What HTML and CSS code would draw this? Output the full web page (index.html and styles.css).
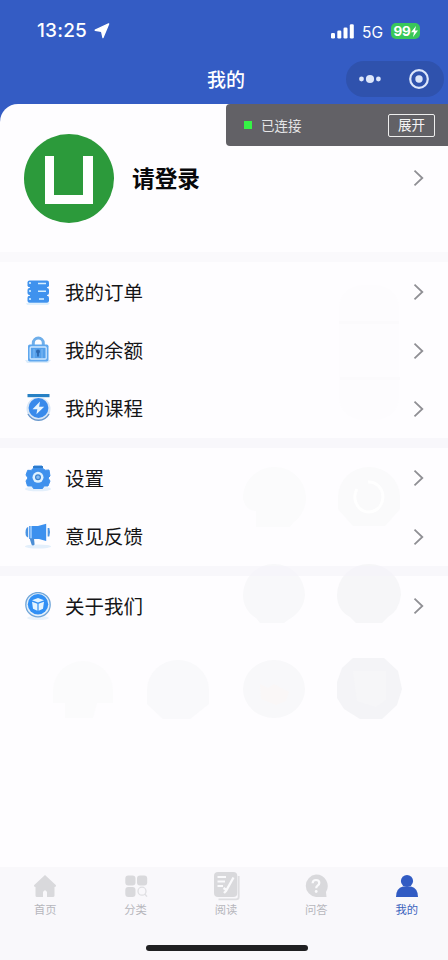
FILE: index.html
```
<!DOCTYPE html>
<html lang="zh-CN">
<head>
<meta charset="utf-8">
<title>我的</title>
<link rel="stylesheet" href="styles.css">
</head>
<body>
<svg width="0" height="0" class="defs">
  <symbol id="chev" viewBox="0 0 12 18"><path d="M1.5 1.6 9.3 9 1.5 16.4" fill="none" stroke="#8f8f94" stroke-width="1.8"/></symbol>
</svg>
<div class="screen">
  <header class="header">
    <div class="status">
      <span class="time">13:25</span>
      <svg class="loc" width="16" height="16" viewBox="0 0 16 16"><path d="M14.6.9 1.2 7.2 7.6 8.4 9 14.6Z" fill="#fff" stroke="#fff" stroke-width="1.4" stroke-linejoin="round"/></svg>
      <svg class="signal" width="24" height="15" viewBox="0 0 24 15" fill="#fff"><rect x="0" y="9" width="4" height="5.5" rx="1.3"/><rect x="6.3" y="6.5" width="4" height="8" rx="1.3"/><rect x="12.5" y="3.5" width="4" height="11" rx="1.3"/><rect x="18.8" y=".2" width="4" height="14.3" rx="1.3"/></svg>
      <span class="net">5G</span>
      <span class="battery">99<svg width="7" height="11" viewBox="0 0 7 11"><path d="M5 0 0 6.2H3L2 11 7 4.6H4Z" fill="#fff"/></svg></span>
    </div>
    <div class="nav">
      <h1>我的</h1>
      <div class="capsule">
        <svg width="22" height="10" viewBox="0 0 22 10" fill="#dce6fb"><circle cx="2.5" cy="5" r="2.4"/><circle cx="11" cy="5" r="4.1"/><circle cx="19.4" cy="5" r="2.4"/></svg>
        <svg width="20" height="20" viewBox="0 0 20 20"><circle cx="10" cy="10" r="8.8" fill="none" stroke="#dce6fb" stroke-width="2.2"/><circle cx="10" cy="10" r="3.7" fill="#dce6fb"/></svg>
      </div>
    </div>
  </header>
  <div class="debug"><i class="dot"></i><span>已连接</span><b>展开</b></div>
  <main class="sheet">
    <svg class="ghosts" width="448" height="480" viewBox="0 260 448 480">
      <rect x="339" y="285" width="60" height="135" rx="24" fill="#fdfcfe"/>
      <path d="M339 321H399V324H339ZM340 377H400V380H340Z" fill="#fbfafc"/>
      <path d="M243 499A31.5 31 0 1 1 293 523L290 527H256V511Q246 511 243 499Z" fill="#fbfbfc"/>
      <path d="M338 509V497A31 30 0 0 1 400 497V509L385 526H353Z" fill="#fafafb"/>
      <path d="M368 482A14 15 0 1 1 357 489" fill="none" stroke="#fff" stroke-width="3"/>
      <path d="M243 595A31 31 0 0 1 305 595Q304 611 288 620L284 623H260L256 618Q243 610 243 595Z" fill="#f8f8fa"/>
      <path d="M337 595A32 31 0 0 1 401 595Q399 611 388 617L382 623H356L350 617Q337 610 337 595Z" fill="#f6f6f8"/>
      <path d="M53 703V691A30 30 0 0 1 113 691V703H97L93 718H65V703Z" fill="#fbfbfc"/>
      <path d="M147 704V690A31 30 0 0 1 209 690V704L190 719H163Z" fill="#f9f9fb"/>
      <ellipse cx="274" cy="689" rx="31" ry="29" fill="#f8f8fa"/>
      <path d="M260 684 268 688 274 684 289 692 286 701 276 705 261 699Z" fill="#faf7f7"/>
      <path d="M353 658H384L398 671 402 689 397 705 382 719H360L344 709 337 698V682L342 668Z" fill="#f4f4f7"/>
      <path d="M353 671H386V700L376 707 357 701Z" fill="#f6f6f8"/>
    </svg>
    <section class="profile">
      <div class="avatar"><svg width="50" height="50" viewBox="0 0 50 50"><path d="M1 1H10V40H39V1H49V49H1Z" fill="#fff"/></svg></div>
      <strong>请登录</strong>
      <svg class="chev"><use href="#chev"/></svg>
    </section>
    <section class="group">
      <div class="row">
        <svg class="ic" viewBox="0 0 28 28"><path d="M2 25H26L24 27H3Z" fill="#dff0fd"/><g fill="#3f92ee"><rect x="3.5" y="2.5" width="21.5" height="6.8" rx="2"/><rect x="3.5" y="10" width="21.5" height="7" rx="2"/><rect x="3.5" y="17.8" width="21.5" height="7" rx="2"/></g><path d="M14 5.5H22M14 13.3H22M15 21H20" stroke="#d6efff" stroke-width="1.6"/><g fill="#d6efff"><circle cx="6" cy="5" r="1.1"/><circle cx="6" cy="13" r="1.1"/><circle cx="6" cy="21" r="1.1"/></g><path d="M6 9.7H23M6 17.4H23" stroke="#3f92ee" stroke-width="2"/></svg>
        <span>我的订单</span><svg class="chev"><use href="#chev"/></svg>
      </div>
      <div class="row">
        <svg class="ic" viewBox="0 0 28 28"><path d="M1 24H27L24 27H3Z" fill="#dcecfb"/><path d="M9.3 10V7a5 5 0 0 1 10 0V10" fill="none" stroke="#6eaeea" stroke-width="3"/><rect x="4" y="8.5" width="20.5" height="17" rx="1.8" fill="#5fa7ee"/><rect x="6.2" y="11" width="16" height="12" rx="1" fill="#549fea" stroke="#cde7ff" stroke-width="1.3"/><path d="M10 13V22M18 13V22" stroke="#78b7f4" stroke-width="1.2"/><circle cx="14" cy="15.6" r="2" fill="#2c68b0"/><path d="M13.1 16H14.9V20.5H13.1Z" fill="#2c68b0"/></svg>
        <span>我的余额</span><svg class="chev"><use href="#chev"/></svg>
      </div>
      <div class="row">
        <svg class="ic" viewBox="0 0 28 28"><rect x="3.5" y="0" width="22" height="3.2" fill="#2780c4"/><circle cx="14.5" cy="15" r="12" fill="#d8e6f6"/><path d="M4 20A12 12 0 0 0 25 20" fill="none" stroke="#6897cc" stroke-width="1.4"/><circle cx="14.5" cy="14" r="9.9" fill="#388aeb"/><path d="M16 7.5 8.5 15.3H13.3L12.4 20.2 20.2 12.7H15.1Z" fill="#e6f5ff"/></svg>
        <span>我的课程</span><svg class="chev"><use href="#chev"/></svg>
      </div>
    </section>
    <section class="group">
      <div class="row">
        <svg class="ic" viewBox="0 0 28 28"><ellipse cx="14" cy="25" rx="13" ry="2.3" fill="#e3effb"/><path d="M10 2H18L19 5 21.5 6.2 25 6 26 12 24 14 26 17 24 22H20L18.5 24.5H9.5L8 22H3.5L2 17 4 14 2 11 3.7 6.3 7 6.4 9 5Z" fill="#3f91ed" stroke="#3f91ed" stroke-linejoin="round"/><path d="M9 3H19" stroke="#2773bf" stroke-width="1.5"/><circle cx="14" cy="13.3" r="5.5" fill="#dff2ff"/><circle cx="14" cy="13.3" r="2.4" fill="#87bdf2" stroke="#3b82cf" stroke-width="1.2"/></svg>
        <span>设置</span><svg class="chev"><use href="#chev"/></svg>
      </div>
      <div class="row">
        <svg class="ic" viewBox="0 0 28 28"><ellipse cx="14" cy="24.5" rx="13" ry="2" fill="#e3effb"/><path d="M4.2 5Q1.5 5.5 1.5 10.5Q1.5 15 4.2 15.5Z" fill="#4a94e4"/><path d="M5.2 4H14L22.2 1.8V19L15 17H5.2Z" fill="#3c90ee"/><path d="M7 4V16.5" stroke="#b8dcff" stroke-width="1.3"/><path d="M5.7 16.5H10L10.6 22.5Q8.8 24.5 7.5 22.5Z" fill="#4c8ed5"/><path d="M23.6 6H25.3Q26.8 10 25.3 14.5H23.6Z" fill="#4a94e4"/></svg>
        <span>意见反馈</span><svg class="chev"><use href="#chev"/></svg>
      </div>
    </section>
    <section class="group last">
      <div class="row">
        <svg class="ic" viewBox="0 0 28 28"><ellipse cx="14" cy="26" rx="11" ry="2" fill="#e9f3fc"/><circle cx="14" cy="12.7" r="12.2" fill="#e4f0fa" stroke="#71a6d9" stroke-width="1.3"/><circle cx="14" cy="12.3" r="10.2" fill="#3190f5"/><path d="M8 8.2 14 6 20 8.2 14 10.5Z" fill="#e5f5ff"/><path d="M8 9.8 13.4 11.8V18.7L9 16.7ZM20 9.8 14.6 11.8V18.7L19 16.7Z" fill="#e5f5ff"/></svg>
        <span>关于我们</span><svg class="chev"><use href="#chev"/></svg>
      </div>
    </section>
  </main>
  <footer class="tabs">
    <nav>
      <a><svg viewBox="0 0 28 28" fill="#d9d9dc"><path d="M14 3 25 13.3Q25.5 15 23.5 15V23.5Q23.5 25 22 25H16V20Q14 16.5 12 20V25H6Q4.5 25 4.5 23.5V15Q2.5 15 3 13.3Z"/></svg>首页</a>
      <a><svg viewBox="0 0 28 28" fill="#d9d9dc"><rect x="3.3" y="3.5" width="10.2" height="10" rx="3"/><rect x="15" y="3.5" width="10.2" height="10" rx="3"/><rect x="3.3" y="15" width="10.2" height="10" rx="3"/><circle cx="20" cy="19.2" r="4" fill="none" stroke="#dfdfe2" stroke-width="1.3"/><path d="m23 22.3 2 2.3" stroke="#dfdfe2" stroke-width="1.4"/></svg>分类</a>
      <a><svg viewBox="0 0 28 28"><path d="M6.5 27.3H24Q26.7 27.3 26.7 25V4" fill="none" stroke="#dedee1" stroke-width="1.8"/><rect x="2" y="0" width="23.3" height="25" rx="4" fill="#d9d9dc"/><path d="M5.5 5H14M5.5 9.5H13M5.5 14H11" stroke="#fafafc" stroke-width="2"/><path d="M21.5 5.5 14.5 18 11.5 16M14 19 12 21" fill="none" stroke="#fafafc" stroke-width="2.3"/></svg>阅读</a>
      <a><svg viewBox="0 0 28 28"><path d="M14 2.5A11.5 11.5 0 0 1 24 20L24.5 25H14A11.3 11.3 0 0 1 14 2.5Z" fill="#d9d9dc"/><path d="M10.6 11.2Q10.8 8 14 8Q17.3 8 17.3 11Q17.3 12.5 15.6 13.6Q14.2 14.5 14.2 16.3" fill="none" stroke="#fafafc" stroke-width="2.2"/><circle cx="14.2" cy="19.5" r="1.4" fill="#fafafc"/></svg>问答</a>
      <a class="on"><svg viewBox="0 0 28 28" fill="#315bc3"><circle cx="14" cy="9" r="6.1"/><path d="M3 25Q3 16 10 14.4H18Q25 16 25 25Z"/></svg>我的</a>
    </nav>
    <div class="home"></div>
  </footer>
</div>
</body>
</html>
```
FILE: styles.css
```
* { box-sizing: border-box; }
body { margin: 0; font-family: "Noto Sans CJK SC", sans-serif; background: #345cc4; }
.defs { position: absolute; }
.screen { width: 448px; height: 960px; display: flex; flex-direction: column; position: relative; overflow: hidden; background: #345cc4; }
.header { height: 104px; flex: none; color: #fff; }
.status { height: 58px; display: flex; align-items: center; padding: 4px 28px 0 37px; font-family: Inter, sans-serif; }
.time { font-size: 19px; font-weight: 500; width: 52px; letter-spacing: .2px; margin-top: -1px; }
.loc { margin-left: 5px; margin-top: -1px; }
.signal { margin-left: auto; margin-top: 1px; }
.net { font-size: 15.5px; margin-left: 7px; width: 22px; margin-top: 2px; }
.battery { display: flex; align-items: center; justify-content: center; margin-left: 7px; width: 29px; height: 16px; border-radius: 5px; background: #39c759; font-size: 13.5px; font-weight: 700; letter-spacing: -.2px; }
.nav { height: 46px; display: grid; grid-template-columns: 1fr auto 1fr; align-items: center; padding: 0 4px; }
.nav h1 { grid-column: 2; margin: 0 0 4px 4px; font-size: 19px; line-height: 28px; font-weight: 500; }
.capsule { justify-self: end; margin: 0 0 5px; width: 98px; height: 36px; border-radius: 18px; background: #2f52ad; display: flex; align-items: center; justify-content: space-between; padding: 0 15px 0 13px; }
.debug { position: absolute; z-index: 3; right: 0; top: 104px; width: 222px; height: 42px; border-radius: 4px 0 0 4px; background: #626166; color: #e5e5e7; display: flex; align-items: center; padding: 0 13px 0 18px; font-size: 13.5px; }
.dot { width: 8px; height: 8px; background: #35f345; margin-right: 9px; }
.debug b { margin-left: auto; width: 47px; height: 23px; border: 1.5px solid #eee; border-radius: 2px; font-weight: 400; line-height: 19px; text-align: center; color: #f4f4f5; }
.sheet { flex: 1; position: relative; background: #fefdff; border-radius: 18px 18px 0 0; color: #151517; }
.ghosts { position: absolute; left: 0; top: 156px; }
.profile, .group { position: relative; }
.profile { height: 158px; border-bottom: 10px solid #faf9fc; display: flex; align-items: center; padding: 0 23px 0 24px; }
.avatar { width: 90px; height: 89px; border-radius: 50%; background: #2c9a3b; display: grid; place-items: center; padding-top: 3px; }
.profile strong { margin-left: 18px; font-size: 22.7px; line-height: 32px; font-weight: 700; color: #08080a; }
.chev { width: 12px; height: 18px; margin-left: auto; flex: none; }
.group { padding-top: 1px; border-bottom: 10px solid rgba(245,244,250,.7); }
.group.last { border: 0; }
.row { height: 58.4px; display: flex; align-items: center; padding: 0 23px 0 24px; font-size: 19.5px; }
.row span { margin-top: -1px; line-height: 28px; }
.row .ic { width: 28px; height: 28px; flex: none; margin: -1px 13px 0 0; }
.tabs { height: 93px; flex: none; background: #f9f8fb; }
.tabs nav { display: flex; height: 77px; padding-top: 5px; margin: 0 -4px 0 0; }
.tabs nav a { flex: none; width: 90.4px; display: flex; flex-direction: column; align-items: center; font-size: 11.3px; line-height: 16px; color: #b6b6bb; }
.tabs nav a svg { width: 28px; height: 28px; overflow: visible; margin-bottom: 1px; }
.tabs nav a.on { color: #3b63bd; }
.home { width: 162px; height: 6px; margin: 1px auto 0 146px; border-radius: 3px; background: #202022; }
```
